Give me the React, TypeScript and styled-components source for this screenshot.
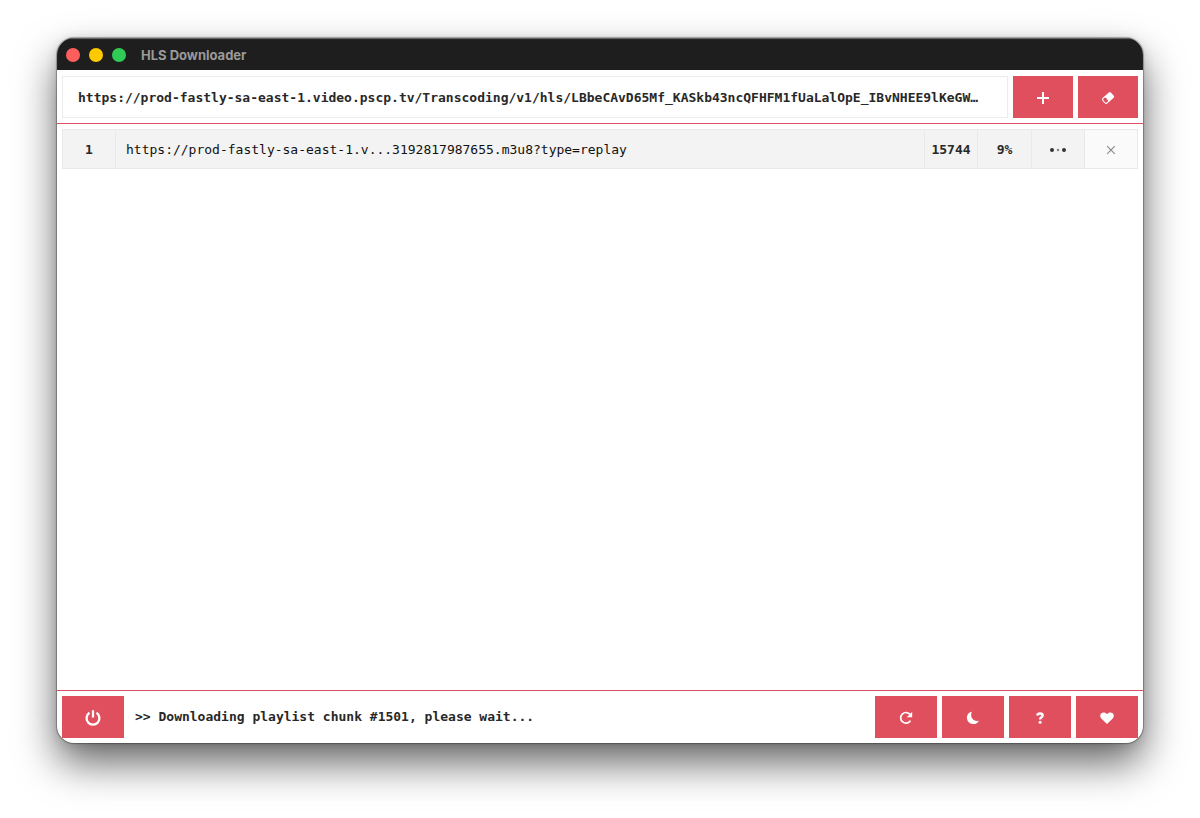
import React from 'react';
import styled, { createGlobalStyle } from 'styled-components';

const mono = '"DejaVu Sans Mono", "Liberation Mono", monospace';

const GlobalStyle = createGlobalStyle`
  *, *::before, *::after { box-sizing: border-box; }
  body { margin: 0; background: #fff; }
`;

const Desktop = styled.div`
  display: flex;
  min-height: 100vh;
  padding: 38px 57px 75px;
`;

const Window = styled.div`
  flex: 1;
  min-width: 0;
  display: flex;
  flex-direction: column;
  overflow: hidden;
  border-radius: 17px;
  background: #fff;
  color: #282828;
  font: bold 13px/20px ${mono};
  box-shadow: 0 0 1px 1px rgba(0, 0, 0, 0.3), 0 2px 12px rgba(0, 0, 0, 0.12), 0 20px 40px rgba(0, 0, 0, 0.6);
`;

const TitleBar = styled.header`
  display: flex;
  align-items: center;
  height: 32px;
  padding: 1px 9px 0;
  background: #1e1e1e;
  box-shadow: inset 0 1px 1px #6a6a6a;
`;

const Lights = styled.div`
  display: flex;
  gap: 9px;
  margin-right: 15px;
`;

const Light = styled.button<{ $color: string }>`
  width: 14px;
  height: 14px;
  padding: 0;
  border: 0;
  border-radius: 50%;
  background: ${(p) => p.$color};
`;

const Title = styled.h1`
  margin: 0;
  color: #9a9a9a;
  font: bold 13px/20px Inter, "Liberation Sans", sans-serif;
`;

const Toolbar = styled.form`
  display: flex;
  gap: 5px;
  padding: 6px 5px 5px;
`;

const UrlInput = styled.input`
  flex: 1;
  min-width: 0;
  height: 42px;
  padding: 0 0 0 15px;
  border: 1px solid #ececec;
  border-radius: 0;
  outline: 0;
  background: #fff;
  color: inherit;
  font: inherit;
  text-overflow: ellipsis;
`;

const ActionButton = styled.button<{ $width: number }>`
  display: flex;
  align-items: center;
  justify-content: center;
  flex: none;
  width: ${(p) => p.$width}px;
  height: 42px;
  padding: 2px 0 0;
  border: 0;
  background: #df4f5e;
  color: #fff;
`;

const Main = styled.main`
  flex: 1;
  padding: 5px;
  border-top: 1px solid #dc5166;
  border-bottom: 1px solid #dc5166;
`;

const Downloads = styled.table`
  width: 100%;
  table-layout: fixed;
  border-collapse: collapse;
  background: #f3f3f3;
`;

const Cell = styled.td<{ $width?: number; $light?: boolean }>`
  width: ${(p) => (p.$width ? `${p.$width}px` : 'auto')};
  height: 39px;
  padding: 1px 0 0;
  border: 1px solid #e9e9e9;
  background: ${(p) => (p.$light ? '#fafafa' : 'transparent')};
  text-align: center;
  vertical-align: middle;
`;

const UrlCell = styled(Cell)`
  padding: 1px 10px 0;
  overflow: hidden;
  color: #111;
  font-weight: normal;
  text-align: left;
  text-overflow: ellipsis;
  white-space: nowrap;
`;

const RemoveButton = styled.button`
  display: flex;
  align-items: center;
  justify-content: center;
  width: 100%;
  height: 36px;
  padding: 0;
  border: 0;
  background: none;
  color: #8c8c8c;
`;

const Dots = styled.svg`
  display: block;
  margin: 0 auto;
`;

const Footer = styled.footer`
  display: flex;
  align-items: center;
  gap: 5px;
  padding: 5px;
`;

const Status = styled.p`
  flex: 1;
  margin: 0;
  padding: 0 0 0 6px;
`;

const Icon = ({ children, size = 16 }: { children: React.ReactNode; size?: number }) => (
  <svg width={size} height={size} viewBox="0 0 16 16" fill="currentColor" aria-hidden="true">
    {children}
  </svg>
);

export default function App() {
  return (
    <>
      <GlobalStyle />
      <Desktop>
        <Window>
          <TitleBar>
            <Lights>
              <Light type="button" $color="#ff5f5c" aria-label="Close" />
              <Light type="button" $color="#fdc900" aria-label="Minimize" />
              <Light type="button" $color="#30cb56" aria-label="Zoom" />
            </Lights>
            <Title>HLS Downloader</Title>
          </TitleBar>

          <Toolbar onSubmit={(e) => e.preventDefault()}>
            <UrlInput
              aria-label="Playlist URL"
              defaultValue="https://prod-fastly-sa-east-1.video.pscp.tv/Transcoding/v1/hls/LBbeCAvD65Mf_KASkb43ncQFHFM1fUaLalOpE_IBvNHEE9lKeGW…"
            />
            <ActionButton $width={60} type="submit" aria-label="Add">
              <Icon>
                <path d="M7 2h2v5h5v2H9v5H7V9H2V7h5z" />
              </Icon>
            </ActionButton>
            <ActionButton $width={60} type="button" aria-label="Clear">
              <Icon>
                <g transform="rotate(-42 8 8)">
                  <path
                    fillRule="evenodd"
                    d="M4.200 4.400h8.200a1.400 1.400 0 0 1 1.400 1.400v4.400a1.400 1.400 0 0 1-1.400 1.400H4.200a2.200 2.200 0 0 1-2.200-2.200V6.600a2.200 2.200 0 0 1 2.200-2.200zM4.400 5.500A1.300 1.300 0 0 0 3.100 6.800v2.400a1.300 1.300 0 0 0 1.300 1.300h.8a1.300 1.300 0 0 0 1.300-1.300V6.800a1.300 1.300 0 0 0-1.300-1.300z"
                  />
                </g>
              </Icon>
            </ActionButton>
          </Toolbar>

          <Main>
            <Downloads>
              <tbody>
                <tr>
                  <Cell $width={53}>1</Cell>
                  <UrlCell>https://prod-fastly-sa-east-1.v...3192817987655.m3u8?type=replay</UrlCell>
                  <Cell $width={53}>15744</Cell>
                  <Cell $width={54}>9%</Cell>
                  <Cell $width={53}>
                    <Dots width="18" height="6" viewBox="0 0 18 6" fill="#333" role="img" aria-label="Working">
                      <circle cx="3" cy="3" r="2" />
                      <circle cx="9" cy="3" r="1.300" fill="#888" />
                      <circle cx="15" cy="3" r="2" />
                    </Dots>
                  </Cell>
                  <Cell $width={53} $light>
                    <RemoveButton type="button" aria-label="Remove">
                      <Icon>
                        <path d="M4.200 4.200l7.600 7.600M11.800 4.200l-7.600 7.600" stroke="currentColor" strokeWidth="1.200" />
                      </Icon>
                    </RemoveButton>
                  </Cell>
                </tr>
              </tbody>
            </Downloads>
          </Main>

          <Footer>
            <ActionButton $width={62} type="button" aria-label="Quit">
              <Icon size={18}>
                <path
                  d="M4.900 3.400a5.700 5.700 0 1 0 6.200 0"
                  fill="none"
                  stroke="currentColor"
                  strokeWidth="2.100"
                />
                <path d="M7 1h2v6.500H7z" />
              </Icon>
            </ActionButton>
            <Status role="status">&gt;&gt; Downloading playlist chunk #1501, please wait...</Status>
            <ActionButton $width={62} type="button" aria-label="Reload">
              <Icon>
                <path
                  d="M12.200 4.600a5.300 5.300 0 1 0 .3 6"
                  fill="none"
                  stroke="currentColor"
                  strokeWidth="1.700"
                />
                <path d="M14.200 1.800v5.400H8.800z" />
              </Icon>
            </ActionButton>
            <ActionButton $width={62} type="button" aria-label="Dark mode">
              <Icon>
                <path d="M6.800 1.800C3.900 2.300 1.900 4.900 1.900 7.800c0 3.500 2.800 6.300 6.300 6.300 2.600 0 4.800-1.400 5.900-3.700-1.100.5-2.100.6-3.200.4C7.200 10.300 5 6 6.800 1.800z" />
              </Icon>
            </ActionButton>
            <ActionButton $width={62} type="button" aria-label="Help">
              <Icon>
                <path
                  d="M5.300 5.400C5.600 4 6.700 3.500 8 3.500c1.500 0 2.600.8 2.600 2 0 1.900-2.500 1.800-2.500 4"
                  fill="none"
                  stroke="currentColor"
                  strokeWidth="2.500"
                />
                <circle cx="8.100" cy="12.300" r="1.500" />
              </Icon>
            </ActionButton>
            <ActionButton $width={62} type="button" aria-label="Support">
              <Icon>
                <path d="M8 14L2.300 8.400C.6 6.700 1 4.200 2.600 3.100 4.300 2 6.700 2.300 8 4.200c1.300-1.900 3.700-2.200 5.400-1.100 1.600 1.100 2 3.600.3 5.300z" />
              </Icon>
            </ActionButton>
          </Footer>
        </Window>
      </Desktop>
    </>
  );
}
